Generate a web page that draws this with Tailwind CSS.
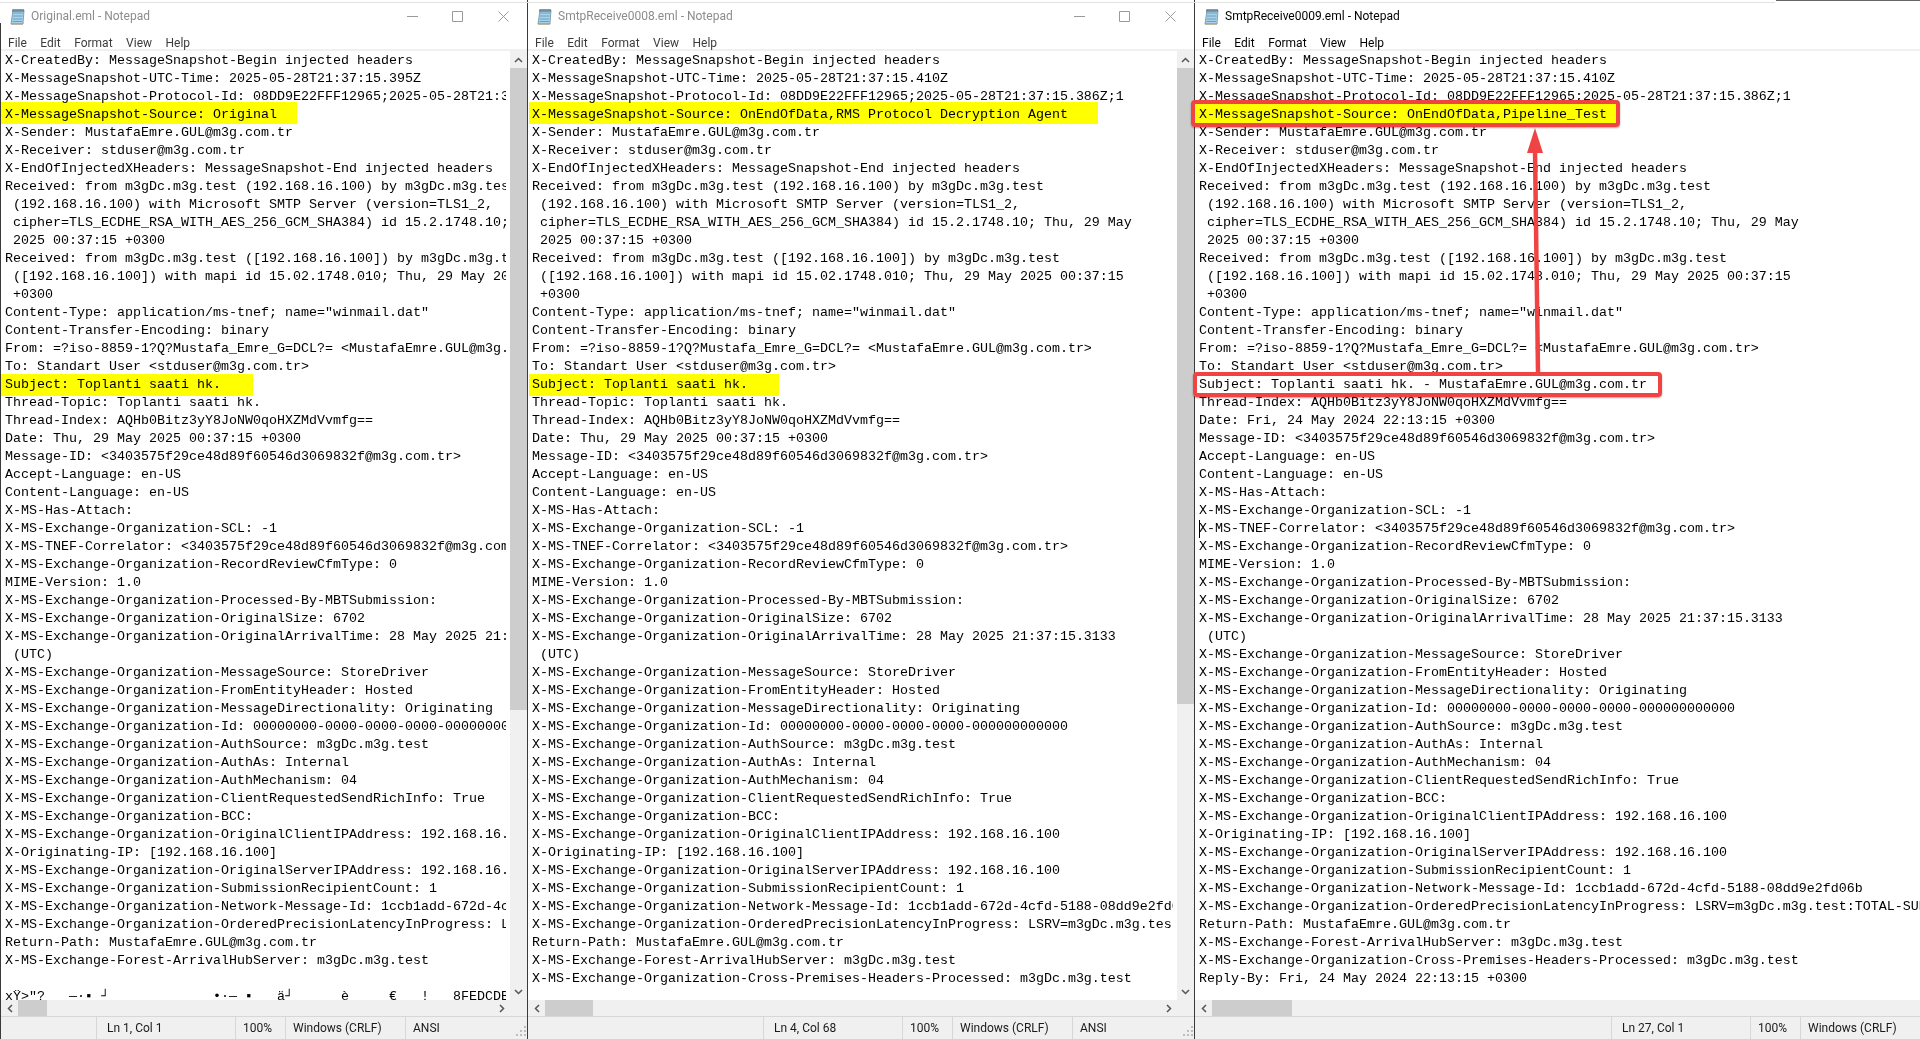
<!DOCTYPE html>
<html lang="en">
<head>
    <meta charset="UTF-8">
    <title>Notepad windows</title>
    <script src="https://cdn.jsdelivr.net/npm/@tailwindcss/browser@4"></script>
</head>
<body class="bg-white overflow-hidden">
<div class="relative flex h-[1039px] w-[1920px] overflow-hidden bg-white font-['Roboto',sans-serif] text-[12px] text-black">

    <!-- Original.eml -->
    <section class="flex h-full w-[528px] shrink-0 flex-col border-r border-[#3a3a3a] pl-px">
        <div class="flex h-[26px] shrink-0 items-center pt-[6px] pl-[9px]">
            <svg class="h-[17px] w-[16px]" viewBox="0 0 16 17"><path d="M3 2h11l-1 14H1z" fill="#a9d3ea" stroke="#6d8ea3" stroke-width=".8"/><path d="M3 5h10M3 8h9.500M2.700 11h9.500M2.500 13.500h9.500" stroke="#5b90b5" stroke-width=".8"/><path d="M3 1v3M5 1v3M7 1v3M9 1v3M11 1v3M13 1v3" stroke="#4f6473"/><path d="M1 16h12" stroke="#b59a6a"/></svg>
            <span class="ml-[5px] text-[#8c8c8c]">Original.eml - Notepad</span>
            <div class="ml-auto flex items-center pr-[18px] text-[#9a9a9a]">
                <svg class="h-[11px] w-[11px]" viewBox="0 0 11 11"><path d="M0 5.500h11" stroke="currentColor"/></svg>
                <svg class="ml-[34px] h-[11px] w-[11px]" viewBox="0 0 11 11"><path d="M.5.500h10v10H.5z" fill="none" stroke="currentColor"/></svg>
                <svg class="ml-[35px] h-[11px] w-[11px]" viewBox="0 0 11 11"><path d="M.5.500l10 10M10.500.500l-10 10" fill="none" stroke="currentColor"/></svg>
            </div>
        </div>
        <div class="flex h-[25px] shrink-0 items-start gap-[13.5px] border-b-2 border-[#f0f0f0] pt-[8px] pl-[7px] text-[#3c3c3c]">
            <span>File</span><span>Edit</span><span>Format</span><span>View</span><span>Help</span>
        </div>
        <div class="flex min-h-0 flex-1">
            <div class="min-w-0 flex-1 overflow-hidden pr-[4px] pl-[4px]">
                <div class="h-full overflow-hidden">
<pre class="pt-px font-['Liberation_Mono',monospace] text-[13.33px] leading-[18px]">X-CreatedBy: MessageSnapshot-Begin injected headers
X-MessageSnapshot-UTC-Time: 2025-05-28T21:37:15.395Z
X-MessageSnapshot-Protocol-Id: 08DD9E22FFF12965;2025-05-28T21:37:15.386Z;1
X-MessageSnapshot-Source: Original
X-Sender: MustafaEmre.GUL@m3g.com.tr
X-Receiver: stduser@m3g.com.tr
X-EndOfInjectedXHeaders: MessageSnapshot-End injected headers
Received: from m3gDc.m3g.test (192.168.16.100) by m3gDc.m3g.test
 (192.168.16.100) with Microsoft SMTP Server (version=TLS1_2,
 cipher=TLS_ECDHE_RSA_WITH_AES_256_GCM_SHA384) id 15.2.1748.10; Thu, 29 May
 2025 00:37:15 +0300
Received: from m3gDc.m3g.test ([192.168.16.100]) by m3gDc.m3g.test
 ([192.168.16.100]) with mapi id 15.02.1748.010; Thu, 29 May 2025 00:37:15
 +0300
Content-Type: application/ms-tnef; name="winmail.dat"
Content-Transfer-Encoding: binary
From: =?iso-8859-1?Q?Mustafa_Emre_G=DCL?= &lt;MustafaEmre.GUL@m3g.com.tr&gt;
To: Standart User &lt;stduser@m3g.com.tr&gt;
Subject: Toplanti saati hk.
Thread-Topic: Toplanti saati hk.
Thread-Index: AQHb0Bitz3yY8JoNW0qoHXZMdVvmfg==
Date: Thu, 29 May 2025 00:37:15 +0300
Message-ID: &lt;3403575f29ce48d89f60546d3069832f@m3g.com.tr&gt;
Accept-Language: en-US
Content-Language: en-US
X-MS-Has-Attach:
X-MS-Exchange-Organization-SCL: -1
X-MS-TNEF-Correlator: &lt;3403575f29ce48d89f60546d3069832f@m3g.com.tr&gt;
X-MS-Exchange-Organization-RecordReviewCfmType: 0
MIME-Version: 1.0
X-MS-Exchange-Organization-Processed-By-MBTSubmission:
X-MS-Exchange-Organization-OriginalSize: 6702
X-MS-Exchange-Organization-OriginalArrivalTime: 28 May 2025 21:37:15.3133
 (UTC)
X-MS-Exchange-Organization-MessageSource: StoreDriver
X-MS-Exchange-Organization-FromEntityHeader: Hosted
X-MS-Exchange-Organization-MessageDirectionality: Originating
X-MS-Exchange-Organization-Id: 00000000-0000-0000-0000-000000000000
X-MS-Exchange-Organization-AuthSource: m3gDc.m3g.test
X-MS-Exchange-Organization-AuthAs: Internal
X-MS-Exchange-Organization-AuthMechanism: 04
X-MS-Exchange-Organization-ClientRequestedSendRichInfo: True
X-MS-Exchange-Organization-BCC:
X-MS-Exchange-Organization-OriginalClientIPAddress: 192.168.16.100
X-Originating-IP: [192.168.16.100]
X-MS-Exchange-Organization-OriginalServerIPAddress: 192.168.16.100
X-MS-Exchange-Organization-SubmissionRecipientCount: 1
X-MS-Exchange-Organization-Network-Message-Id: 1ccb1add-672d-4cfd-5188-08dd9e2fd06b
X-MS-Exchange-Organization-OrderedPrecisionLatencyInProgress: LSRV=m3gDc.m3g.test:TOTAL-SUBMISSION
Return-Path: MustafaEmre.GUL@m3g.com.tr
X-MS-Exchange-Forest-ArrivalHubServer: m3gDc.m3g.test

xŸ&gt;"?   —·▪ ┘             •·— ▪   ä┘      è     €   !   8FEDCDB</pre>
                </div>
            </div>
            <div class="flex w-[17px] shrink-0 flex-col bg-[#f0f0f0]">
                <div class="flex h-[17px] items-center justify-center"><svg class="h-[6px] w-[9px]" viewBox="0 0 9 6"><path d="M1 5l3.500-3.500L8 5" fill="none" stroke="#555" stroke-width="1.500"/></svg></div>
                <div class="h-[642px] bg-[#cdcdcd]"></div>
                <div class="flex-1"></div>
                <div class="flex h-[17px] items-center justify-center"><svg class="h-[6px] w-[9px]" viewBox="0 0 9 6"><path d="M1 1l3.500 3.500L8 1" fill="none" stroke="#555" stroke-width="1.500"/></svg></div>
            </div>
        </div>
        <div class="flex h-[16px] shrink-0 items-stretch bg-[#f0f0f0] pr-[17px]">
            <div class="flex w-[17px] items-center justify-center"><svg class="h-[9px] w-[6px]" viewBox="0 0 6 9"><path d="M5 1L1.500 4.500 5 8" fill="none" stroke="#555" stroke-width="1.500"/></svg></div>
            <div class="w-[29px] bg-[#cdcdcd]"></div>
            <div class="flex-1"></div>
            <div class="flex w-[17px] items-center justify-center"><svg class="h-[9px] w-[6px]" viewBox="0 0 6 9"><path d="M1 1l3.500 3.500L1 8" fill="none" stroke="#555" stroke-width="1.500"/></svg></div>
        </div>
        <div class="flex h-[23px] shrink-0 items-center justify-end border-t border-[#d7d7d7] bg-[#f0f0f0] text-[#1a1a1a]">
            <div class="flex h-full w-[139px] items-center border-l border-[#d7d7d7] pl-[10px]">Ln 1, Col 1</div>
            <div class="flex h-full w-[50px] items-center border-l border-[#d7d7d7] pl-[7px]">100%</div>
            <div class="flex h-full w-[120px] items-center border-l border-[#d7d7d7] pl-[7px]">Windows (CRLF)</div>
            <div class="flex h-full w-[122px] items-center border-l border-[#d7d7d7] pl-[7px]">ANSI
                <svg class="mt-auto mb-[2px] ml-auto h-[11px] w-[11px]" viewBox="0 0 11 11" fill="#bdbdbd"><path d="M8 0h2v2H8zM4 4h2v2H4zM8 4h2v2H8zM0 8h2v2H0zM4 8h2v2H4zM8 8h2v2H8z"/></svg>
            </div>
        </div>
    </section>

    <!-- SmtpReceive0008.eml -->
    <section class="flex h-full w-[667px] shrink-0 flex-col border-r border-[#3a3a3a]">
        <div class="flex h-[26px] shrink-0 items-center pt-[6px] pl-[9px]">
            <svg class="h-[17px] w-[16px]" viewBox="0 0 16 17"><path d="M3 2h11l-1 14H1z" fill="#a9d3ea" stroke="#6d8ea3" stroke-width=".8"/><path d="M3 5h10M3 8h9.500M2.700 11h9.500M2.500 13.500h9.500" stroke="#5b90b5" stroke-width=".8"/><path d="M3 1v3M5 1v3M7 1v3M9 1v3M11 1v3M13 1v3" stroke="#4f6473"/><path d="M1 16h12" stroke="#b59a6a"/></svg>
            <span class="ml-[5px] text-[#8c8c8c]">SmtpReceive0008.eml - Notepad</span>
            <div class="ml-auto flex items-center pr-[18px] text-[#9a9a9a]">
                <svg class="h-[11px] w-[11px]" viewBox="0 0 11 11"><path d="M0 5.500h11" stroke="currentColor"/></svg>
                <svg class="ml-[34px] h-[11px] w-[11px]" viewBox="0 0 11 11"><path d="M.5.500h10v10H.5z" fill="none" stroke="currentColor"/></svg>
                <svg class="ml-[35px] h-[11px] w-[11px]" viewBox="0 0 11 11"><path d="M.5.500l10 10M10.500.500l-10 10" fill="none" stroke="currentColor"/></svg>
            </div>
        </div>
        <div class="flex h-[25px] shrink-0 items-start gap-[13.5px] border-b-2 border-[#f0f0f0] pt-[8px] pl-[7px] text-[#3c3c3c]">
            <span>File</span><span>Edit</span><span>Format</span><span>View</span><span>Help</span>
        </div>
        <div class="flex min-h-0 flex-1">
            <div class="min-w-0 flex-1 overflow-hidden pr-[4px] pl-[4px]">
                <div class="h-full overflow-hidden">
<pre class="pt-px font-['Liberation_Mono',monospace] text-[13.33px] leading-[18px]">X-CreatedBy: MessageSnapshot-Begin injected headers
X-MessageSnapshot-UTC-Time: 2025-05-28T21:37:15.410Z
X-MessageSnapshot-Protocol-Id: 08DD9E22FFF12965;2025-05-28T21:37:15.386Z;1
X-MessageSnapshot-Source: OnEndOfData,RMS Protocol Decryption Agent
X-Sender: MustafaEmre.GUL@m3g.com.tr
X-Receiver: stduser@m3g.com.tr
X-EndOfInjectedXHeaders: MessageSnapshot-End injected headers
Received: from m3gDc.m3g.test (192.168.16.100) by m3gDc.m3g.test
 (192.168.16.100) with Microsoft SMTP Server (version=TLS1_2,
 cipher=TLS_ECDHE_RSA_WITH_AES_256_GCM_SHA384) id 15.2.1748.10; Thu, 29 May
 2025 00:37:15 +0300
Received: from m3gDc.m3g.test ([192.168.16.100]) by m3gDc.m3g.test
 ([192.168.16.100]) with mapi id 15.02.1748.010; Thu, 29 May 2025 00:37:15
 +0300
Content-Type: application/ms-tnef; name="winmail.dat"
Content-Transfer-Encoding: binary
From: =?iso-8859-1?Q?Mustafa_Emre_G=DCL?= &lt;MustafaEmre.GUL@m3g.com.tr&gt;
To: Standart User &lt;stduser@m3g.com.tr&gt;
Subject: Toplanti saati hk.
Thread-Topic: Toplanti saati hk.
Thread-Index: AQHb0Bitz3yY8JoNW0qoHXZMdVvmfg==
Date: Thu, 29 May 2025 00:37:15 +0300
Message-ID: &lt;3403575f29ce48d89f60546d3069832f@m3g.com.tr&gt;
Accept-Language: en-US
Content-Language: en-US
X-MS-Has-Attach:
X-MS-Exchange-Organization-SCL: -1
X-MS-TNEF-Correlator: &lt;3403575f29ce48d89f60546d3069832f@m3g.com.tr&gt;
X-MS-Exchange-Organization-RecordReviewCfmType: 0
MIME-Version: 1.0
X-MS-Exchange-Organization-Processed-By-MBTSubmission:
X-MS-Exchange-Organization-OriginalSize: 6702
X-MS-Exchange-Organization-OriginalArrivalTime: 28 May 2025 21:37:15.3133
 (UTC)
X-MS-Exchange-Organization-MessageSource: StoreDriver
X-MS-Exchange-Organization-FromEntityHeader: Hosted
X-MS-Exchange-Organization-MessageDirectionality: Originating
X-MS-Exchange-Organization-Id: 00000000-0000-0000-0000-000000000000
X-MS-Exchange-Organization-AuthSource: m3gDc.m3g.test
X-MS-Exchange-Organization-AuthAs: Internal
X-MS-Exchange-Organization-AuthMechanism: 04
X-MS-Exchange-Organization-ClientRequestedSendRichInfo: True
X-MS-Exchange-Organization-BCC:
X-MS-Exchange-Organization-OriginalClientIPAddress: 192.168.16.100
X-Originating-IP: [192.168.16.100]
X-MS-Exchange-Organization-OriginalServerIPAddress: 192.168.16.100
X-MS-Exchange-Organization-SubmissionRecipientCount: 1
X-MS-Exchange-Organization-Network-Message-Id: 1ccb1add-672d-4cfd-5188-08dd9e2fd06b
X-MS-Exchange-Organization-OrderedPrecisionLatencyInProgress: LSRV=m3gDc.m3g.test:TOTAL-SUBMISSION
Return-Path: MustafaEmre.GUL@m3g.com.tr
X-MS-Exchange-Forest-ArrivalHubServer: m3gDc.m3g.test
X-MS-Exchange-Organization-Cross-Premises-Headers-Processed: m3gDc.m3g.test</pre>
                </div>
            </div>
            <div class="flex w-[17px] shrink-0 flex-col bg-[#f0f0f0]">
                <div class="flex h-[17px] items-center justify-center"><svg class="h-[6px] w-[9px]" viewBox="0 0 9 6"><path d="M1 5l3.500-3.500L8 5" fill="none" stroke="#555" stroke-width="1.500"/></svg></div>
                <div class="h-[636px] bg-[#cdcdcd]"></div>
                <div class="flex-1"></div>
                <div class="flex h-[17px] items-center justify-center"><svg class="h-[6px] w-[9px]" viewBox="0 0 9 6"><path d="M1 1l3.500 3.500L8 1" fill="none" stroke="#555" stroke-width="1.500"/></svg></div>
            </div>
        </div>
        <div class="flex h-[16px] shrink-0 items-stretch bg-[#f0f0f0] pr-[17px]">
            <div class="flex w-[17px] items-center justify-center"><svg class="h-[9px] w-[6px]" viewBox="0 0 6 9"><path d="M5 1L1.500 4.500 5 8" fill="none" stroke="#555" stroke-width="1.500"/></svg></div>
            <div class="w-[48px] bg-[#cdcdcd]"></div>
            <div class="flex-1"></div>
            <div class="flex w-[17px] items-center justify-center"><svg class="h-[9px] w-[6px]" viewBox="0 0 6 9"><path d="M1 1l3.500 3.500L1 8" fill="none" stroke="#555" stroke-width="1.500"/></svg></div>
        </div>
        <div class="flex h-[23px] shrink-0 items-center justify-end border-t border-[#d7d7d7] bg-[#f0f0f0] text-[#1a1a1a]">
            <div class="flex h-full w-[139px] items-center border-l border-[#d7d7d7] pl-[10px]">Ln 4, Col 68</div>
            <div class="flex h-full w-[50px] items-center border-l border-[#d7d7d7] pl-[7px]">100%</div>
            <div class="flex h-full w-[120px] items-center border-l border-[#d7d7d7] pl-[7px]">Windows (CRLF)</div>
            <div class="flex h-full w-[122px] items-center border-l border-[#d7d7d7] pl-[7px]">ANSI
                <svg class="mt-auto mb-[2px] ml-auto h-[11px] w-[11px]" viewBox="0 0 11 11" fill="#bdbdbd"><path d="M8 0h2v2H8zM4 4h2v2H4zM8 4h2v2H8zM0 8h2v2H0zM4 8h2v2H4zM8 8h2v2H8z"/></svg>
            </div>
        </div>
    </section>

    <!-- SmtpReceive0009.eml: runs past the right edge of the screen -->
    <section class="flex h-full w-[847px] shrink-0 flex-col">
        <div class="flex h-[26px] shrink-0 items-center pt-[6px] pl-[9px]">
            <svg class="h-[17px] w-[16px]" viewBox="0 0 16 17"><path d="M3 2h11l-1 14H1z" fill="#a9d3ea" stroke="#6d8ea3" stroke-width=".8"/><path d="M3 5h10M3 8h9.500M2.700 11h9.500M2.500 13.500h9.500" stroke="#5b90b5" stroke-width=".8"/><path d="M3 1v3M5 1v3M7 1v3M9 1v3M11 1v3M13 1v3" stroke="#4f6473"/><path d="M1 16h12" stroke="#b59a6a"/></svg>
            <span class="ml-[5px] text-black">SmtpReceive0009.eml - Notepad</span>
        </div>
        <div class="flex h-[25px] shrink-0 items-start gap-[13.5px] border-b-2 border-[#f0f0f0] pt-[8px] pl-[7px] text-black">
            <span>File</span><span>Edit</span><span>Format</span><span>View</span><span>Help</span>
        </div>
        <div class="flex min-h-0 flex-1">
            <div class="min-w-0 flex-1 overflow-hidden pl-[4px]">
<pre class="pt-px font-['Liberation_Mono',monospace] text-[13.33px] leading-[18px]">X-CreatedBy: MessageSnapshot-Begin injected headers
X-MessageSnapshot-UTC-Time: 2025-05-28T21:37:15.410Z
X-MessageSnapshot-Protocol-Id: 08DD9E22FFF12965;2025-05-28T21:37:15.386Z;1
X-MessageSnapshot-Source: OnEndOfData,Pipeline_Test
X-Sender: MustafaEmre.GUL@m3g.com.tr
X-Receiver: stduser@m3g.com.tr
X-EndOfInjectedXHeaders: MessageSnapshot-End injected headers
Received: from m3gDc.m3g.test (192.168.16.100) by m3gDc.m3g.test
 (192.168.16.100) with Microsoft SMTP Server (version=TLS1_2,
 cipher=TLS_ECDHE_RSA_WITH_AES_256_GCM_SHA384) id 15.2.1748.10; Thu, 29 May
 2025 00:37:15 +0300
Received: from m3gDc.m3g.test ([192.168.16.100]) by m3gDc.m3g.test
 ([192.168.16.100]) with mapi id 15.02.1748.010; Thu, 29 May 2025 00:37:15
 +0300
Content-Type: application/ms-tnef; name="winmail.dat"
Content-Transfer-Encoding: binary
From: =?iso-8859-1?Q?Mustafa_Emre_G=DCL?= &lt;MustafaEmre.GUL@m3g.com.tr&gt;
To: Standart User &lt;stduser@m3g.com.tr&gt;
Subject: Toplanti saati hk. - MustafaEmre.GUL@m3g.com.tr
Thread-Index: AQHb0Bitz3yY8JoNW0qoHXZMdVvmfg==
Date: Fri, 24 May 2024 22:13:15 +0300
Message-ID: &lt;3403575f29ce48d89f60546d3069832f@m3g.com.tr&gt;
Accept-Language: en-US
Content-Language: en-US
X-MS-Has-Attach:
X-MS-Exchange-Organization-SCL: -1
X-MS-TNEF-Correlator: &lt;3403575f29ce48d89f60546d3069832f@m3g.com.tr&gt;
X-MS-Exchange-Organization-RecordReviewCfmType: 0
MIME-Version: 1.0
X-MS-Exchange-Organization-Processed-By-MBTSubmission:
X-MS-Exchange-Organization-OriginalSize: 6702
X-MS-Exchange-Organization-OriginalArrivalTime: 28 May 2025 21:37:15.3133
 (UTC)
X-MS-Exchange-Organization-MessageSource: StoreDriver
X-MS-Exchange-Organization-FromEntityHeader: Hosted
X-MS-Exchange-Organization-MessageDirectionality: Originating
X-MS-Exchange-Organization-Id: 00000000-0000-0000-0000-000000000000
X-MS-Exchange-Organization-AuthSource: m3gDc.m3g.test
X-MS-Exchange-Organization-AuthAs: Internal
X-MS-Exchange-Organization-AuthMechanism: 04
X-MS-Exchange-Organization-ClientRequestedSendRichInfo: True
X-MS-Exchange-Organization-BCC:
X-MS-Exchange-Organization-OriginalClientIPAddress: 192.168.16.100
X-Originating-IP: [192.168.16.100]
X-MS-Exchange-Organization-OriginalServerIPAddress: 192.168.16.100
X-MS-Exchange-Organization-SubmissionRecipientCount: 1
X-MS-Exchange-Organization-Network-Message-Id: 1ccb1add-672d-4cfd-5188-08dd9e2fd06b
X-MS-Exchange-Organization-OrderedPrecisionLatencyInProgress: LSRV=m3gDc.m3g.test:TOTAL-SUBMISSION
Return-Path: MustafaEmre.GUL@m3g.com.tr
X-MS-Exchange-Forest-ArrivalHubServer: m3gDc.m3g.test
X-MS-Exchange-Organization-Cross-Premises-Headers-Processed: m3gDc.m3g.test
Reply-By: Fri, 24 May 2024 22:13:15 +0300</pre>
            </div>
        </div>
        <div class="flex h-[16px] shrink-0 items-stretch bg-[#f0f0f0]">
            <div class="flex w-[17px] items-center justify-center"><svg class="h-[9px] w-[6px]" viewBox="0 0 6 9"><path d="M5 1L1.500 4.500 5 8" fill="none" stroke="#555" stroke-width="1.500"/></svg></div>
            <div class="w-[80px] bg-[#cdcdcd]"></div>
        </div>
        <div class="flex h-[23px] shrink-0 items-center justify-end border-t border-[#d7d7d7] bg-[#f0f0f0] text-[#1a1a1a]">
            <div class="flex h-full w-[139px] items-center border-l border-[#d7d7d7] pl-[10px]">Ln 27, Col 1</div>
            <div class="flex h-full w-[50px] items-center border-l border-[#d7d7d7] pl-[7px]">100%</div>
            <div class="flex h-full w-[120px] items-center border-l border-[#d7d7d7] pl-[7px]">Windows (CRLF)</div>
            <div class="flex h-full w-[122px] items-center border-l border-[#d7d7d7] pl-[7px]">ANSI</div>
        </div>
    </section>

    <!-- marker highlights and annotations drawn over the screenshot -->
    <div class="absolute top-[102px] left-0 h-[22px] w-[297px] bg-[#ffff00] mix-blend-multiply"></div>
    <div class="absolute top-[374px] left-0 h-[22px] w-[253px] bg-[#ffff00] mix-blend-multiply"></div>
    <div class="absolute top-[102px] left-[529px] h-[22px] w-[569px] bg-[#ffff00] mix-blend-multiply"></div>
    <div class="absolute top-[374px] left-[529px] h-[22px] w-[250px] bg-[#ffff00] mix-blend-multiply"></div>
    <div class="absolute top-[102px] left-[1194px] h-[23px] w-[424px] bg-[#ffff00] mix-blend-multiply"></div>
    <div class="absolute top-[100px] left-[1191px] h-[27px] w-[429px] rounded-[4px] border-4 border-[#f04444] shadow-[0_1px_2px_rgba(0,0,0,0.35)]"></div>
    <div class="absolute top-[372px] left-[1193px] h-[25px] w-[469px] rounded-[4px] border-4 border-[#f04444] shadow-[0_1px_2px_rgba(0,0,0,0.35)]"></div>
    <svg class="absolute top-[126px] left-[1520px] h-[250px] w-[30px]" viewBox="0 0 30 250"><path d="M15 24L18 246" stroke="#f04444" stroke-width="4.500"/><path d="M15 2L7 27h16z" fill="#f04444"/></svg>
    <div class="absolute top-[520px] left-[1199px] h-[18px] w-px bg-black"></div>

    <!-- thin desktop edges visible around the windows -->
    <div class="absolute top-[2px] left-0 h-px w-[1775px] bg-[#e3e3e3]"></div>
    <div class="absolute top-0 right-0 h-px w-[144px] bg-[#666666]"></div>
    <div class="absolute top-[23px] bottom-0 left-0 w-px bg-[#3a3a3a]"></div>
</div>
</body>
</html>
